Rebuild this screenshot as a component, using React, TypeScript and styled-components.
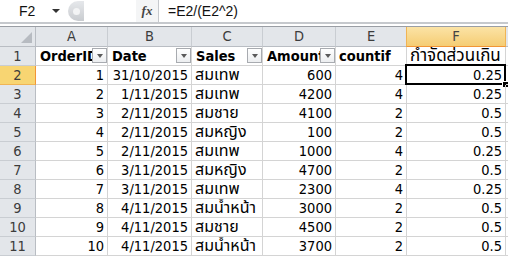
import styled, { createGlobalStyle } from "styled-components";

const GlobalStyle = createGlobalStyle`
  html, body {
    margin: 0;
    padding: 0;
    background: #ffffff;
  }
  body {
    font-family: "DejaVu Sans Condensed", "Liberation Sans", "Noto Sans Thai", sans-serif;
  }
`;

const Page = styled.div`
  width: 508px;
  height: 257px;
  overflow: hidden;
  background: #ffffff;
`;

const FormulaBar = styled.div`
  display: flex;
  align-items: stretch;
  height: 22px;
  border-bottom: 2px solid #c6c9cd;
`;

const NameBox = styled.div`
  width: 68px;
  display: flex;
  align-items: center;
  justify-content: space-between;
  padding: 0 8px 0 19px;
  box-sizing: border-box;
  font-family: "Liberation Sans", sans-serif;
  font-size: 14px;
  color: #111;
`;

const DropArrow = styled.span`
  width: 0;
  height: 0;
  border-left: 4px solid transparent;
  border-right: 4px solid transparent;
  border-top: 4px solid #333;
`;

const Knob = styled.div`
  width: 16px;
  margin: 1px 0;
  border-radius: 10px 0 0 10px;
  background: linear-gradient(#e6e8eb, #c9ccd0);
  display: flex;
  align-items: center;
  padding-left: 5px;
  box-sizing: border-box;
  &::before {
    content: "";
    width: 7px;
    height: 7px;
    border-radius: 50%;
    background: #f3f4f5;
  }
`;

const Gap = styled.div`
  width: 52px;
  background: #ffffff;
`;

const FxButton = styled.div`
  width: 22px;
  display: flex;
  align-items: center;
  justify-content: center;
  font-family: "Liberation Serif", serif;
  font-style: italic;
  font-weight: bold;
  font-size: 13px;
  color: #444;
  background: #f4f5f6;
`;

const FormulaInput = styled.div`
  flex: 1;
  display: flex;
  align-items: center;
  padding-left: 9px;
  border-left: 1px solid #c6c9cd;
  font-family: "Liberation Sans", sans-serif;
  font-size: 14px;
  color: #111;
`;

const Divider = styled.div`
  height: 2px;
  border-bottom: 1px solid #9a9ea4;
`;

const Grid = styled.div`
  display: grid;
  grid-template-columns: 36px 72px 84px 71px 73px 71px 99px 1fr;
  grid-template-rows: 20px repeat(11, 19px);
`;

const Corner = styled.div`
  background: #e3e6ea;
  border-right: 1px solid #b9bdc3;
  border-bottom: 1px solid #b9bdc3;
  box-sizing: border-box;
  display: flex;
  align-items: flex-end;
  justify-content: flex-end;
  padding: 0 3px 3px 0;
  &::after {
    content: "";
    width: 0;
    height: 0;
    border-left: 11px solid transparent;
    border-bottom: 11px solid #b7bbc1;
  }
`;

const ColHeader = styled.div<{ $active?: boolean }>`
  box-sizing: border-box;
  display: flex;
  align-items: center;
  justify-content: center;
  font-size: 14.5px;
  line-height: 1;
  color: ${(p) => (p.$active ? "#444" : "#3c3c3c")};
  background: ${(p) =>
    p.$active ? "linear-gradient(#fbe3a6, #f5cd74)" : "#e3e6ea"};
  border-right: 1px solid ${(p) => (p.$active ? "#f0b454" : "#c9cdd2")};
  border-bottom: 1px solid ${(p) => (p.$active ? "#f29536" : "#b9bdc3")};
  ${(p) => (p.$active ? "border-left: 1px solid #f0b454;" : "")}
  ${(p) => (p.$active ? "margin-left: -1px;" : "")}
`;

const RowHeader = styled.div<{ $active?: boolean }>`
  box-sizing: border-box;
  display: flex;
  align-items: center;
  justify-content: center;
  font-size: 14.5px;
  line-height: 1;
  color: #3c3c3c;
  background: ${(p) => (p.$active ? "#f8d572" : "#e3e6ea")};
  border-right: 1px solid ${(p) => (p.$active ? "#f29536" : "#b9bdc3")};
  border-bottom: 1px solid ${(p) => (p.$active ? "#f0b454" : "#c9cdd2")};
`;

const Cell = styled.div<{ $align?: "left" | "right"; $bold?: boolean; $selected?: boolean }>`
  position: relative;
  box-sizing: border-box;
  display: flex;
  align-items: center;
  justify-content: ${(p) => (p.$align === "right" ? "flex-end" : "flex-start")};
  padding: 0 3px;
  font-size: 14.5px;
  line-height: 1;
  font-weight: ${(p) => (p.$bold ? "bold" : "normal")};
  color: #000;
  white-space: nowrap;
  overflow: ${(p) => (p.$selected ? "visible" : "hidden")};
  border-right: 1px solid #d4d4d4;
  border-bottom: 1px solid #d4d4d4;
  ${(p) =>
    p.$selected
      ? `
    &::before {
      content: "";
      position: absolute;
      left: -2px;
      top: -2px;
      right: -1px;
      bottom: -1px;
      border: 2px solid #000;
    }
    &::after {
      content: "";
      position: absolute;
      right: -4px;
      bottom: -4px;
      width: 5px;
      height: 5px;
      background: #000;
      border: 1px solid #fff;
    }
  `
      : ""}
`;

const HeadLabel = styled.span`
  flex: 1;
  overflow: hidden;
  white-space: nowrap;
  padding-left: 1px;
`;

const FilterButton = styled.span`
  flex: none;
  width: 15px;
  height: 15px;
  box-sizing: border-box;
  margin-right: -3px;
  align-self: flex-start;
  margin-top: 1px;
  border: 1px solid #a8abb0;
  background: linear-gradient(#ffffff, #eceef0);
  display: flex;
  align-items: center;
  justify-content: center;
  &::after {
    content: "";
    width: 0;
    height: 0;
    border-left: 3.5px solid transparent;
    border-right: 3.5px solid transparent;
    border-top: 4px solid #5a5a5a;
    margin-top: 1px;
  }
`;

const ThaiText = styled.span<{ $size?: number }>`
  font-family: "Noto Sans Thai", "Loma", "Garuda", "Tahoma", sans-serif;
  font-size: ${(p) => p.$size ?? 16}px;
  line-height: 1;
  font-weight: normal;
`;

const columns = ["A", "B", "C", "D", "E", "F", ""];

const rows = [
  { id: 1, date: "31/10/2015", sales: "สมเทพ", amount: 600, countif: 4, excess: "0.25" },
  { id: 2, date: "1/11/2015", sales: "สมเทพ", amount: 4200, countif: 4, excess: "0.25" },
  { id: 3, date: "2/11/2015", sales: "สมชาย", amount: 4100, countif: 2, excess: "0.5" },
  { id: 4, date: "2/11/2015", sales: "สมหญิง", amount: 100, countif: 2, excess: "0.5" },
  { id: 5, date: "2/11/2015", sales: "สมเทพ", amount: 1000, countif: 4, excess: "0.25" },
  { id: 6, date: "3/11/2015", sales: "สมหญิง", amount: 4700, countif: 2, excess: "0.5" },
  { id: 7, date: "3/11/2015", sales: "สมเทพ", amount: 2300, countif: 4, excess: "0.25" },
  { id: 8, date: "4/11/2015", sales: "สมน้ำหน้า", amount: 3000, countif: 2, excess: "0.5" },
  { id: 9, date: "4/11/2015", sales: "สมชาย", amount: 4500, countif: 2, excess: "0.5" },
  { id: 10, date: "4/11/2015", sales: "สมน้ำหน้า", amount: 3700, countif: 2, excess: "0.5" },
];

function App() {
  return (
    <Page>
      <GlobalStyle />
      <FormulaBar>
        <NameBox>
          F2
          <DropArrow />
        </NameBox>
        <Knob />
        <Gap />
        <FxButton>fx</FxButton>
        <FormulaInput>=E2/(E2^2)</FormulaInput>
      </FormulaBar>
      <Divider />
      <Grid>
        <Corner />
        {columns.map((c) => (
          <ColHeader key={c || "G"} $active={c === "F"}>
            {c}
          </ColHeader>
        ))}

        <RowHeader>1</RowHeader>
        <Cell $bold>
          <HeadLabel>OrderID</HeadLabel>
          <FilterButton />
        </Cell>
        <Cell $bold>
          <HeadLabel>Date</HeadLabel>
          <FilterButton />
        </Cell>
        <Cell $bold>
          <HeadLabel>Sales</HeadLabel>
          <FilterButton />
        </Cell>
        <Cell $bold>
          <HeadLabel>Amount</HeadLabel>
          <FilterButton />
        </Cell>
        <Cell $bold>countif</Cell>
        <Cell>
          <ThaiText $size={17}>กำจัดส่วนเกิน</ThaiText>
        </Cell>
        <Cell />

        {rows.map((r, i) => (
          <>
            <RowHeader key={`h${r.id}`} $active={i === 0}>
              {i + 2}
            </RowHeader>
            <Cell key={`a${r.id}`} $align="right">{r.id}</Cell>
            <Cell key={`b${r.id}`} $align="right">{r.date}</Cell>
            <Cell key={`c${r.id}`}>
              <ThaiText>{r.sales}</ThaiText>
            </Cell>
            <Cell key={`d${r.id}`} $align="right">{r.amount}</Cell>
            <Cell key={`e${r.id}`} $align="right">{r.countif}</Cell>
            <Cell key={`f${r.id}`} $align="right" $selected={i === 0}>
              {r.excess}
            </Cell>
            <Cell key={`g${r.id}`} />
          </>
        ))}
      </Grid>
    </Page>
  );
}

export default App;
